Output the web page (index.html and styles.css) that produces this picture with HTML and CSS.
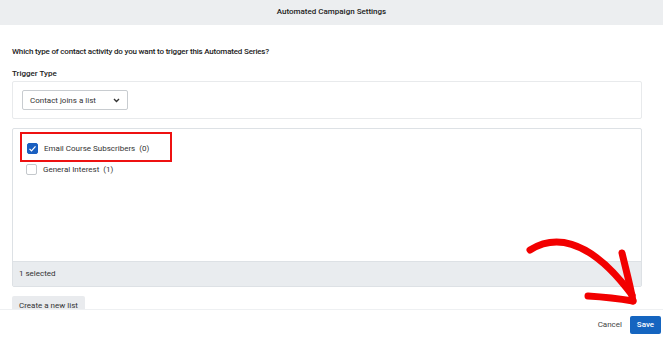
FILE: index.html
```html
<!DOCTYPE html>
<html lang="en">
<head>
    <meta charset="UTF-8">
    <title>Automated Campaign Settings</title>
    <link rel="stylesheet" href="styles.css">
</head>
<body>
    <div class="modal-header">Automated Campaign Settings</div>

    <div class="modal-body">
        <p class="question">Which type of contact activity do you want to trigger this Automated Series?</p>

        <div class="field-label">Trigger Type</div>
        <div class="trigger-box">
            <div class="select">
                <span>Contact joins a list</span>
                <svg class="chevron" width="7" height="5" viewBox="0 0 7 5"><path d="M1 1l2.5 2.5L6 1" fill="none" stroke="#333" stroke-width="1.4"/></svg>
            </div>
        </div>

        <div class="list-box">
            <div class="list-items">
                <label class="list-item highlighted">
                    <span class="checkbox checked">
                        <svg width="9" height="9" viewBox="0 0 9 9"><path d="M1.5 4.8l2 2 4-4.5" fill="none" stroke="#fff" stroke-width="1.2"/></svg>
                    </span>
                    Email Course Subscribers&nbsp;&nbsp;(0)
                </label>
                <label class="list-item">
                    <span class="checkbox"></span>
                    General Interest&nbsp;&nbsp;(1)
                </label>
            </div>
            <div class="list-footer">1 selected</div>
        </div>

        <button class="btn-secondary">Create a new list</button>
    </div>

    <div class="modal-footer">
        <button class="btn-link">Cancel</button>
        <button class="btn-primary">Save</button>
    </div>

    <svg class="annotation-arrow" width="120" height="75" viewBox="0 0 120 75">
        <path d="M4 17 C 25 4, 60 0, 106 62" fill="none" stroke="#f20000" stroke-width="7" stroke-linecap="round"/>
        <path d="M96 20 C 100 37, 104 51, 107 68" fill="none" stroke="#f20000" stroke-width="7" stroke-linecap="round"/>
        <path d="M62 63 C 78 64, 95 66, 107 68" fill="none" stroke="#f20000" stroke-width="7" stroke-linecap="round"/>
    </svg>
</body>
</html>
```

FILE: styles.css
```css
* {
    margin: 0;
    padding: 0;
    box-sizing: border-box;
}

body {
    font-family: Roboto, 'Liberation Sans', sans-serif;
    font-size: 8px;
    color: #222;
    background: #fff;
    overflow: hidden;
    height: 339px;
}

.modal-header {
    height: 25px;
    background: #eceef0;
    text-align: center;
    line-height: 23px;
    font-size: 8px;
    font-weight: 500;
    color: #222;
}

.modal-body {
    padding: 21px 21px 0 12px;
}

.question {
    font-weight: 500;
    line-height: 12px;
    letter-spacing: -0.18px;
    margin-bottom: 10px;
}

.field-label {
    font-weight: 500;
    line-height: 12px;
    margin-bottom: 1px;
}

.trigger-box {
    border: 1px solid #e8eaec;
    border-radius: 2px;
    padding: 8px 9px;
    height: 38px;
}

.select {
    width: 106px;
    height: 20px;
    border: 1px solid #c8ccd0;
    border-radius: 2px;
    display: flex;
    align-items: center;
    justify-content: space-between;
    padding: 0 7px 0 7px;
    color: #333;
}

.chevron {
    margin-top: 1px;
}

.list-box {
    margin-top: 9px;
    border: 1px solid #dde1e5;
    border-radius: 2px;
    height: 159px;
    display: flex;
    flex-direction: column;
}

.list-items {
    flex: 1;
    padding: 3px 0 0 7px;
    display: flex;
    flex-direction: column;
}

.list-item {
    display: flex;
    align-items: center;
    gap: 6px;
    height: 15px;
    padding-left: 6px;
    color: #333;
    width: 152px;
}

.list-item.highlighted {
    height: 30px;
    border: 2px solid #ee1111;
    padding: 2px 0 0 5px;
}

.checkbox {
    width: 11px;
    height: 11px;
    border: 1px solid #c4c8cc;
    border-radius: 2px;
    background: #fff;
    display: flex;
    align-items: center;
    justify-content: center;
}

.checkbox.checked {
    background: #1a5fc0;
    border-color: #1a5fc0;
}

.list-footer {
    height: 25px;
    background: #e9ecef;
    border-top: 1px solid #dde1e5;
    padding-left: 6px;
    line-height: 23px;
    color: #333;
}

.btn-secondary {
    margin-top: 9px;
    height: 18px;
    padding: 0 7px;
    border: none;
    border-radius: 2px;
    background: #e9ebee;
    font-family: inherit;
    font-size: 8px;
    color: #333;
}

.modal-footer {
    position: fixed;
    left: 0;
    right: 0;
    bottom: 0;
    height: 30px;
    background: #fff;
    border-top: 1px solid #eef0f2;
    display: flex;
    align-items: center;
    justify-content: flex-end;
    gap: 8px;
    padding-right: 2px;
}

.btn-link {
    border: none;
    background: none;
    font-family: inherit;
    font-size: 8px;
    color: #444;
}

.btn-primary {
    height: 18px;
    width: 31px;
    border: none;
    border-radius: 2px;
    background: #1565c0;
    color: #fff;
    font-family: inherit;
    font-size: 8px;
    font-weight: 500;
}

.annotation-arrow {
    position: absolute;
    left: 526px;
    top: 233px;
}
```
